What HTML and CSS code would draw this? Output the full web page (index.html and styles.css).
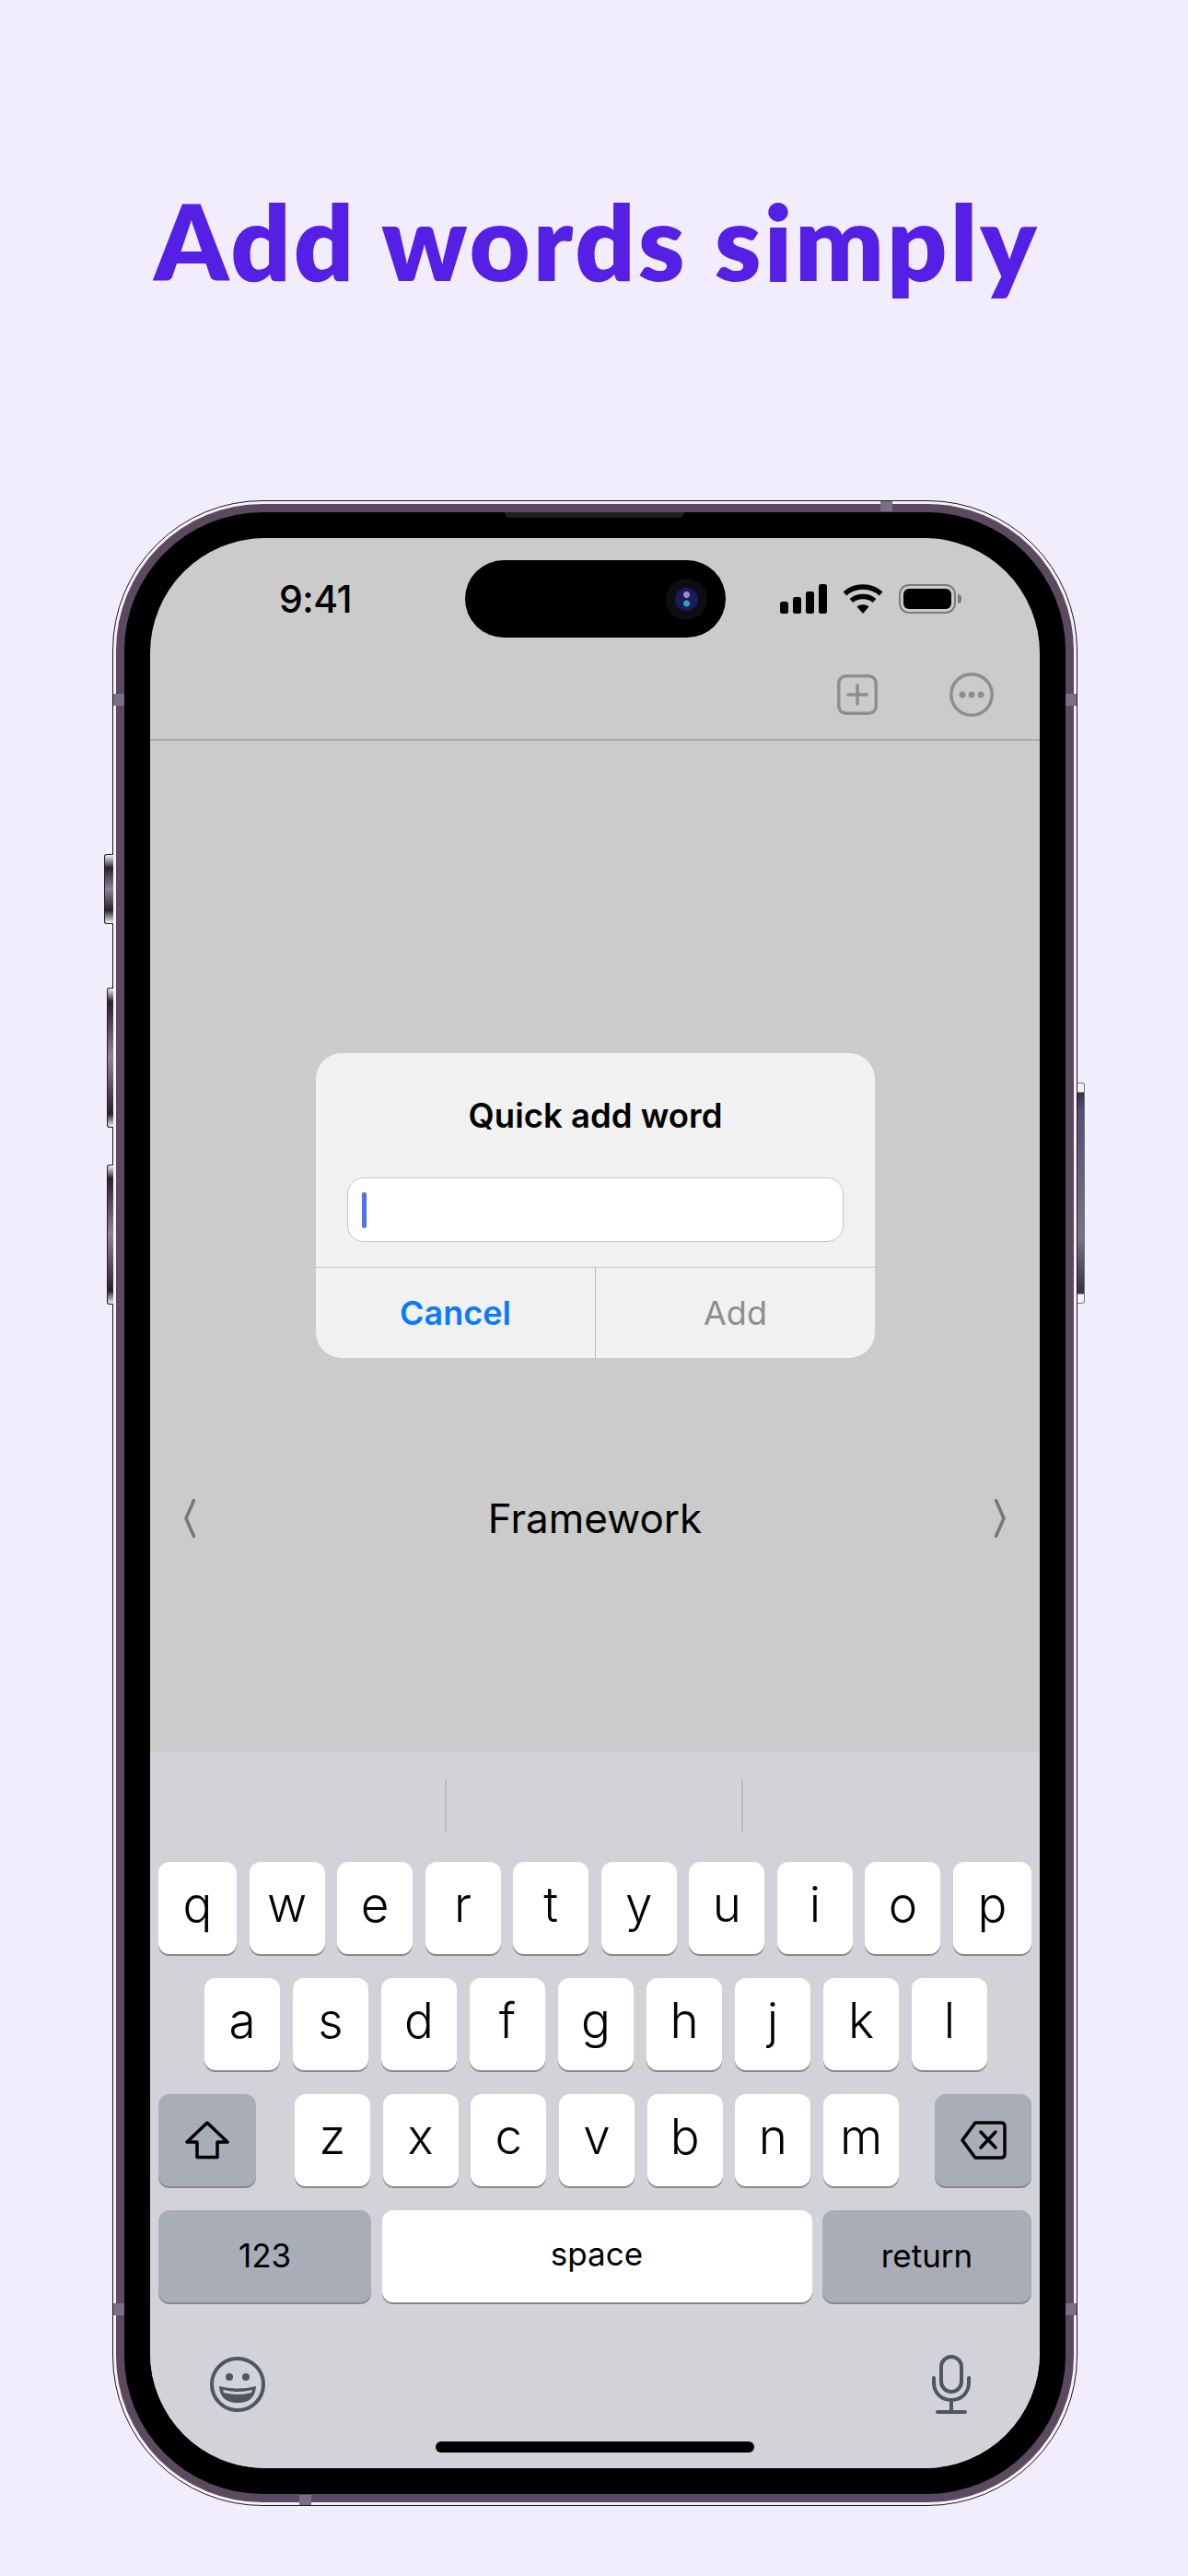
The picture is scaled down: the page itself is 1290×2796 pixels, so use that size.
FILE: index.html
```html
<!DOCTYPE html>
<html>
<head>
    <meta charset="utf-8">
    <title>Add words simply</title>
    <link rel="stylesheet" href="styles.css">
</head>
<body>

<h1 class="headline">Add words simply</h1>

<div class="phone">
    <span class="btn btn-silent"></span>
    <span class="btn btn-up"></span>
    <span class="btn btn-down"></span>
    <span class="btn-power"></span>
    <span class="notch-band nb-left1"></span>
    <span class="notch-band nb-left2"></span>
    <span class="notch-band nb-right1"></span>
    <span class="notch-band nb-right2"></span>
    <span class="notch-band nb-top"></span>
    <span class="notch-band nb-bottom"></span>

    <div class="band">
        <div class="bezel">
            <span class="speaker"></span>
            <div class="screen">
                <div class="island">
                    <span class="camera"><span class="lens"></span></span>
                </div>

                <div class="status">
                    <span class="clock">9:41</span>
                    <div class="status-icons">
                        <span class="signal">
                            <i class="s1"></i><i class="s2"></i><i class="s3"></i><i class="s4"></i>
                        </span>
                        <svg class="wifi" width="44" height="32" viewBox="0 0 44 32">
                            <path class="arc" d="M2.500 10.500C13 .5 31 .5 41.500 10.500"/>
                            <path class="arc" d="M9.500 18C16 12 28 12 34.500 18"/>
                            <path d="M15.500 24.500C19 21.500 25 21.500 28.500 24.500L22 32Z"/>
                        </svg>
                        <span class="battery"><span class="battery-fill"></span></span>
                    </div>
                </div>

                <div class="toolbar">
                    <svg class="tool-plus" width="44" height="44" viewBox="0 0 44 44">
                        <rect x="1.750" y="1.750" width="40.500" height="40.500" rx="8"/>
                        <path d="M22 12V32M12 22H32"/>
                    </svg>
                    <svg class="tool-more" width="48" height="48" viewBox="0 0 48 48">
                        <circle class="ring" cx="24" cy="24" r="22.250"/>
                        <circle cx="14" cy="24" r="3.500"/>
                        <circle cx="24" cy="24" r="3.500"/>
                        <circle cx="34" cy="24" r="3.500"/>
                    </svg>
                </div>

                <div class="content">
                    <div class="word-row">
                        <svg class="chev" width="12" height="42" viewBox="0 0 12 42"><path d="M10.500 1.500L2 21L10.500 40.500"/></svg>
                        <span class="word">Framework</span>
                        <svg class="chev" width="12" height="42" viewBox="0 0 12 42"><path d="M1.500 1.500L10 21L1.500 40.500"/></svg>
                    </div>
                </div>

                <div class="dialog">
                    <div class="dialog-title">Quick add word</div>
                    <div class="dialog-input"><span class="caret"></span></div>
                    <div class="dialog-actions">
                        <span class="action action-cancel">Cancel</span>
                        <span class="action action-add">Add</span>
                    </div>
                </div>

                <div class="keyboard">
                    <div class="suggestions">
                        <i></i><i></i>
                    </div>
                    <div class="keys">
                        <div class="row">
                            <span class="key key-edge">q</span><span class="key">w</span><span class="key">e</span><span class="key">r</span><span class="key">t</span><span class="key">y</span><span class="key">u</span><span class="key">i</span><span class="key">o</span><span class="key key-edge">p</span>
                        </div>
                        <div class="row row-center">
                            <span class="key">a</span><span class="key">s</span><span class="key">d</span><span class="key">f</span><span class="key">g</span><span class="key">h</span><span class="key">j</span><span class="key">k</span><span class="key">l</span>
                        </div>
                        <div class="row row-mods">
                            <span class="key key-dark key-mod">
                                <svg width="48" height="42" viewBox="0 0 48 42"><path d="M24 2L46 23H35V39.500H13V23H2Z"/></svg>
                            </span>
                            <div class="letters">
                                <span class="key">z</span><span class="key">x</span><span class="key">c</span><span class="key">v</span><span class="key">b</span><span class="key">n</span><span class="key">m</span>
                            </div>
                            <span class="key key-dark key-mod key-delete">
                                <svg width="50" height="42" viewBox="0 0 50 42"><path d="M16 2H44Q48 2 48 6V36Q48 40 44 40H16L2 21Z"/><path d="M22 12L38 29M38 12L22 29"/></svg>
                            </span>
                        </div>
                        <div class="row">
                            <span class="key key-dark key-wide key-label">123</span>
                            <span class="key key-space key-label">space</span>
                            <span class="key key-dark key-return key-label">return</span>
                        </div>
                    </div>
                    <div class="kb-bottom">
                        <svg class="kb-icon" width="60" height="60" viewBox="0 0 60 60">
                            <circle class="ring" cx="30" cy="30" r="28"/>
                            <circle cx="21" cy="22" r="4"/>
                            <circle cx="39" cy="22" r="4"/>
                            <path d="M10 32Q30 37 50 32Q49 50 30 50Q11 50 10 32Z"/>
                            <path class="teeth" d="M14 36Q30 40 46 36L45 39Q30 43 15 39Z"/>
                        </svg>
                        <svg class="kb-icon mic" width="42" height="64" viewBox="0 0 42 64">
                            <rect x="10" y="2" width="22" height="38" rx="11"/>
                            <path d="M2 25V30C2 41 10 49 21 49C32 49 40 41 40 30V25M21 49V62M6 62H36"/>
                        </svg>
                    </div>
                    <div class="home-bar"></div>
                </div>
            </div>
        </div>
    </div>
</div>

</body>
</html>
```
FILE: styles.css
```css
html, body {
    margin: 0;
    padding: 0;
}
body {
    width: 1290px;
    height: 2796px;
    overflow: hidden;
    background: #f1edfd;
    font-family: Inter, "Liberation Sans", sans-serif;
    color: #000;
}

.headline {
    margin: 0;
    padding: 184px 0 0 6px;
    height: 543px;
    box-sizing: border-box;
    text-align: center;
    font-family: Lato, "Noto Sans", sans-serif;
    font-size: 114px;
    line-height: 154px;
    font-weight: 800;
    letter-spacing: 3px;
    color: #551fe5;
}

/* device frame */
.phone {
    position: relative;
    width: 1048px;
    height: 2177px;
    margin-left: 122px;
    box-sizing: border-box;
    padding: 3px;
    background: #f4f2f5;
    border: 1px solid #1d1a20;
    border-radius: 163px;
}
.band {
    height: 100%;
    box-sizing: border-box;
    padding: 9px;
    background: #5b4962;
    border-radius: 159px;
}
.bezel {
    position: relative;
    height: 100%;
    box-sizing: border-box;
    padding: 28px;
    background: #000;
    border-radius: 150px;
}
.speaker {
    position: absolute;
    left: 413px;
    top: 0;
    width: 195px;
    height: 6px;
    background: #202022;
    border-radius: 0 0 10px 10px;
}
.btn, .btn-power {
    position: absolute;
    box-sizing: border-box;
    border: 1px solid #222;
}
.btn {
    left: -7px;
    width: 7px;
    border-right: 0;
    border-radius: 3px 0 0 3px;
    background: linear-gradient(#f2f2f2 0, #2a2030 14px, #8d8196 50%, #2a2030 calc(100% - 14px), #f2f2f2 100%);
}
.btn-silent {
    left: -10px;
    width: 10px;
    top: 383px;
    height: 76px;
}
.btn-up {
    top: 528px;
    height: 152px;
}
.btn-down {
    top: 720px;
    height: 152px;
}
.btn-power {
    right: -9px;
    top: 631px;
    width: 8px;
    height: 240px;
    border-left: 0;
    border-color: #777;
    border-radius: 0 3px 3px 0;
    background: linear-gradient(#f2f2f2 0 9px, #3a2e48 10px, #5a4a78 30px, #7b7088 70%, #3a2e48 calc(100% - 10px), #f2f2f2 calc(100% - 9px));
}
.notch-band {
    position: absolute;
    background: #7b6e88;
}
.nb-left1, .nb-left2 {
    left: 0;
    width: 12px;
    height: 13px;
}
.nb-right1, .nb-right2 {
    right: 0;
    width: 12px;
    height: 13px;
}
.nb-left1, .nb-right1 { top: 209px; }
.nb-left2, .nb-right2 { top: 1956px; }
.nb-top, .nb-bottom {
    width: 13px;
    height: 11px;
}
.nb-top { left: 833px; top: 0; }
.nb-bottom { left: 202px; bottom: 0; }

/* screen */
.screen {
    position: relative;
    display: flex;
    flex-direction: column;
    height: 100%;
    overflow: hidden;
    background: #cbcbcb;
    border-radius: 125px;
}
.island {
    position: absolute;
    left: 342px;
    top: 24px;
    width: 283px;
    height: 84px;
    background: #000;
    border-radius: 42px;
}
.camera {
    position: absolute;
    right: 20px;
    top: 20px;
    width: 45px;
    height: 45px;
    border-radius: 50%;
    background: #0e0e12;
    display: flex;
    align-items: center;
    justify-content: center;
}
.lens {
    width: 25px;
    height: 25px;
    border-radius: 50%;
    background: radial-gradient(circle at 50% 30%, #9b86d8 0 3px, transparent 4px),
                radial-gradient(circle at 50% 68%, #2fa5b8 0 3px, transparent 4px),
                #1b1a5c;
}
.status {
    display: flex;
    justify-content: space-between;
    align-items: center;
    height: 118px;
    padding: 14px 84px 0 140px;
    box-sizing: border-box;
}
.clock {
    font-size: 41px;
    font-weight: 500;
    letter-spacing: -0.5px;
}
.status-icons {
    display: flex;
    align-items: flex-end;
    gap: 17px;
}
.signal {
    display: flex;
    align-items: flex-end;
    gap: 5px;
    height: 32px;
    margin-left: 2px;
}
.signal i {
    display: block;
    width: 9px;
    background: #000;
    border-radius: 2.500px;
}
.s1 { height: 13px; }
.s2 { height: 18px; }
.s3 { height: 24px; }
.s4 { height: 32px; }
.wifi {
    display: block;
    fill: #000;
}
.wifi .arc {
    fill: none;
    stroke: #000;
    stroke-width: 5.500px;
}
.battery {
    position: relative;
    display: block;
    width: 62px;
    height: 32px;
    margin-right: 7px;
    box-sizing: border-box;
    padding: 3px;
    border: 2px solid #7c7c7c;
    border-radius: 11px;
}
.battery:after {
    content: "";
    position: absolute;
    right: -8px;
    top: 9px;
    width: 4px;
    height: 10px;
    background: #7c7c7c;
    border-radius: 0 4px 4px 0;
}
.battery-fill {
    display: block;
    height: 100%;
    background: #000;
    border-radius: 6px;
}
.toolbar {
    display: flex;
    align-items: center;
    justify-content: flex-end;
    gap: 78px;
    height: 102px;
    padding: 3px 50px 0 0;
    box-sizing: border-box;
    border-bottom: 2px solid #aaaaaa;
}
.tool-plus rect, .tool-plus path {
    fill: none;
    stroke: #8e8e8e;
    stroke-width: 3.500px;
    stroke-linecap: round;
}
.tool-more {
    fill: #8e8e8e;
}
.tool-more .ring {
    fill: none;
    stroke: #8e8e8e;
    stroke-width: 3.500px;
}

.content {
    flex: 1;
    display: flex;
    flex-direction: column;
    justify-content: flex-end;
    padding-bottom: 224px;
}
.word-row {
    display: flex;
    justify-content: space-between;
    align-items: center;
    padding: 0 37px;
    height: 60px;
}
.word {
    font-size: 44px;
    color: #000;
}
.chev {
    fill: none;
    stroke: #777;
    stroke-width: 3.500px;
    stroke-linecap: round;
}

/* dialog lies over the page */
.dialog {
    position: absolute;
    left: 180px;
    top: 559px;
    width: 607px;
    height: 331px;
    background: #f1f1f1;
    border-radius: 28px;
    display: flex;
    flex-direction: column;
}
.dialog-title {
    height: 135px;
    padding-top: 44px;
    box-sizing: border-box;
    text-align: center;
    font-size: 36.500px;
    line-height: 48px;
    font-weight: 600;
}
.dialog-input {
    display: flex;
    align-items: center;
    height: 70px;
    margin: 0 34px 27px 34px;
    padding-left: 15px;
    box-sizing: border-box;
    background: #fff;
    border: 1.500px solid #c6c6c6;
    border-radius: 18px;
}
.caret {
    display: block;
    width: 5px;
    height: 39px;
    border-radius: 3px;
    background: #4a74f5;
}
.dialog-actions {
    flex: 1;
    display: flex;
    border-top: 1.500px solid #c4c4c4;
}
.action {
    flex: 1;
    display: flex;
    align-items: center;
    justify-content: center;
    font-size: 36px;
}
.action-cancel {
    color: #0a7aff;
    font-weight: 600;
    border-right: 1px solid #b9b9b9;
}
.action-add {
    color: #8e8e8e;
}

/* keyboard */
.keyboard {
    height: 777px;
    flex: none;
    background: #d1d3d9;
    display: flex;
    flex-direction: column;
    position: relative;
}
.suggestions {
    display: flex;
    justify-content: center;
    gap: 320px;
    padding-top: 30px;
    padding-right: 2px;
    height: 119px;
    box-sizing: border-box;
}
.suggestions i {
    display: block;
    width: 2px;
    height: 56px;
    background: #b9bac0;
}
.keys {
    display: flex;
    flex-direction: column;
    gap: 24px;
    padding: 0 9px;
}
.row {
    display: flex;
    justify-content: space-between;
    height: 102px;
}
.row-center {
    justify-content: center;
    gap: 14px;
    padding-left: 2px;
}
.row-mods {
    justify-content: flex-start;
}
.letters {
    display: flex;
    gap: 13.700px;
    margin-left: 42px;
}
.key {
    display: flex;
    justify-content: center;
    width: 82px;
    height: 100px;
    box-sizing: border-box;
    background: #fff;
    border-radius: 12px;
    box-shadow: 0 2px 0 #86878b;
    font-size: 53px;
    line-height: 92px;
    font-weight: 350;
}
.key-edge {
    width: 85px;
}
.key-dark {
    background: #a9adb7;
}
.key-mod {
    width: 106px;
    align-items: center;
}
.key-delete {
    width: 105px;
    margin-left: auto;
}
.key-mod svg {
    fill: none;
    stroke: #000;
    stroke-width: 3.500px;
    stroke-linejoin: round;
    stroke-linecap: round;
}
.key-label {
    font-size: 35px;
    font-weight: 400;
    line-height: 98px;
}
.key-space {
    width: 467px;
    line-height: 94px;
}
.key-wide { width: 231px; }
.key-return { width: 227px; }
.kb-bottom {
    display: flex;
    justify-content: space-between;
    align-items: center;
    padding: 55px 75px 0 65px;
}
.kb-icon {
    display: block;
    fill: #50565c;
}
.kb-icon .ring {
    fill: none;
    stroke: #50565c;
    stroke-width: 4px;
}
.kb-icon .teeth {
    fill: #d1d3d9;
}
.mic {
    fill: none;
    stroke: #50565c;
    stroke-width: 4px;
    stroke-linecap: round;
}
.home-bar {
    position: absolute;
    left: 310px;
    bottom: 17px;
    width: 346px;
    height: 12px;
    background: #000;
    border-radius: 6px;
}
```
